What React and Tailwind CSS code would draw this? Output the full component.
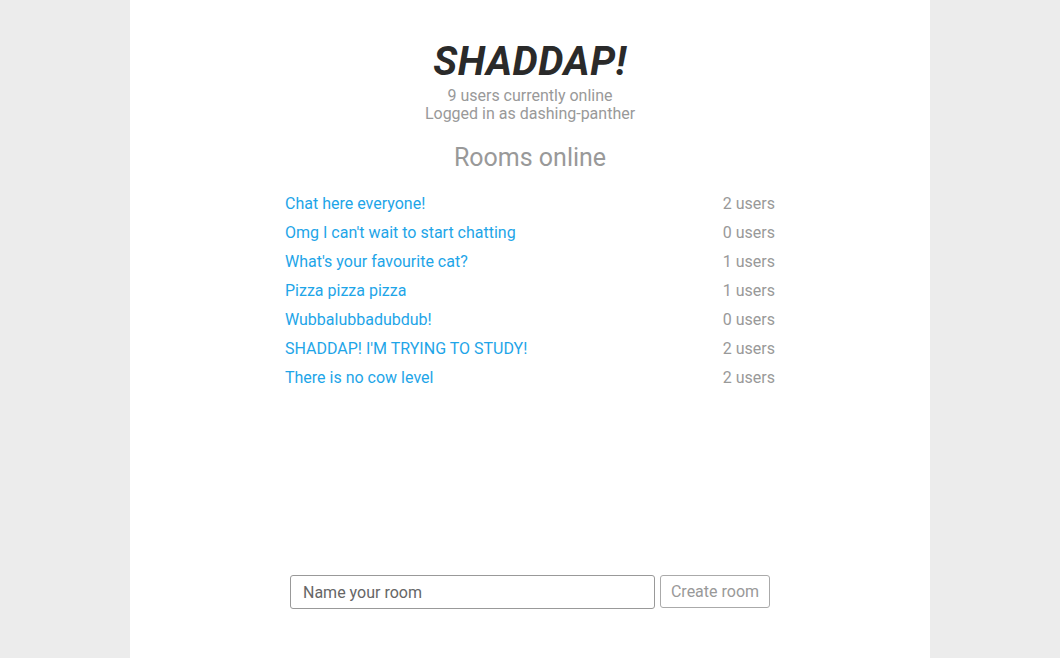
import React from 'react';

const rooms = [
  { name: 'Chat here everyone!', users: 2 },
  { name: "Omg I can't wait to start chatting", users: 0 },
  { name: "What's your favourite cat?", users: 1 },
  { name: 'Pizza pizza pizza', users: 1 },
  { name: 'Wubbalubbadubdub!', users: 0 },
  { name: "SHADDAP! I'M TRYING TO STUDY!", users: 2 },
  { name: 'There is no cow level', users: 2 },
];

const App = () => {
  return (
    <div className="min-h-screen bg-[#ececec] font-['Roboto',sans-serif]">
      <div className="w-[800px] mx-auto bg-white min-h-[658px] flex flex-col items-center">
        <h1 className="mt-[42px] text-[40px] leading-[40px] font-bold italic text-[#2a2a2a] tracking-[0.5px]">
          SHADDAP!
        </h1>
        <p className="mt-[5px] text-[16px] leading-[18px] text-[#999]">9 users currently online</p>
        <p className="text-[16px] leading-[18px] text-[#999]">Logged in as dashing-panther</p>

        <h2 className="mt-[20px] text-[25px] leading-[30px] text-[#999]">Rooms online</h2>

        <ul className="mt-[16px] w-[490px]">
          {rooms.map((room) => (
            <li key={room.name} className="flex justify-between h-[29px] items-center text-[16px]">
              <a href="#" className="text-[#1ea5e8]">{room.name}</a>
              <span className="text-[#999]">{room.users} users</span>
            </li>
          ))}
        </ul>

        <div className="flex-1" />

        <form className="mb-[49px] flex gap-[5px]" onSubmit={(e) => e.preventDefault()}>
          <input
            type="text"
            placeholder="Name your room"
            className="w-[365px] h-[34px] px-[12px] border border-[#999] rounded-[3px] text-[16px] text-[#666] placeholder:text-[#666] outline-none"
          />
          <button
            type="submit"
            className="w-[110px] h-[33px] border border-[#aaa] rounded-[3px] text-[16px] text-[#999] bg-white"
          >
            Create room
          </button>
        </form>
      </div>
    </div>
  );
};

export default App;
